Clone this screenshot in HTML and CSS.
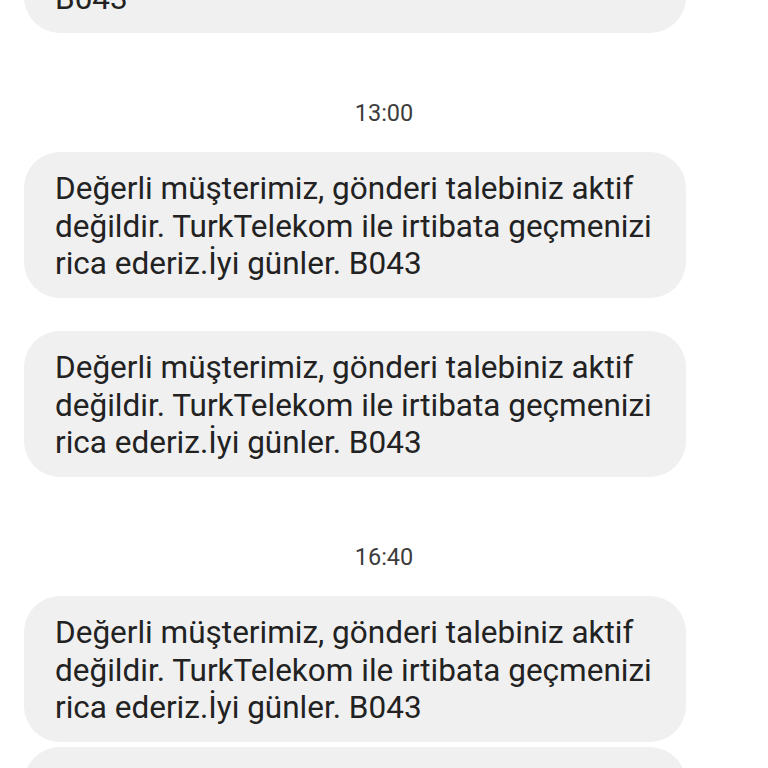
FILE: index.html
```html
<!DOCTYPE html>
<html lang="tr">
<head>
<meta charset="utf-8">
<link rel="stylesheet" href="styles.css">
</head>
<body>
<div class="chat">
  <div class="bubble first">Değerli müşterimiz, gönderi talebiniz aktif değildir. TurkTelekom ile irtibata geçmenizi rica ederiz.<br>İyi günler.<br>B043</div>
  <div class="time">13:00</div>
  <div class="bubble">Değerli müşterimiz, gönderi talebiniz aktif değildir. TurkTelekom ile irtibata geçmenizi rica ederiz.İyi günler. B043</div>
  <div class="bubble spaced">Değerli müşterimiz, gönderi talebiniz aktif değildir. TurkTelekom ile irtibata geçmenizi rica ederiz.İyi günler. B043</div>
  <div class="time">16:40</div>
  <div class="bubble">Değerli müşterimiz, gönderi talebiniz aktif değildir. TurkTelekom ile irtibata geçmenizi rica ederiz.İyi günler. B043</div>
  <div class="bubble tight">Değerli müşterimiz, gönderi talebiniz aktif değildir. TurkTelekom ile irtibata geçmenizi rica ederiz.İyi günler. B043</div>
</div>
</body>
</html>
```
FILE: styles.css
```css
html, body {
  margin: 0;
  padding: 0;
  background: #ffffff;
  overflow: hidden;
  height: 768px;
}
.chat {
  display: flex;
  flex-direction: column;
  font-family: Roboto, "Noto Sans", sans-serif;
}
.bubble {
  box-sizing: border-box;
  height: 146px;
  margin: 0 82px 0 24px;
  background: #f0f0f0;
  border-radius: 36px;
  padding: 18px 8px 0 31px;
  font-size: 31.5px;
  line-height: 37.5px;
  color: #222222;
}
.first {
  height: 221px;
  margin-top: -188px;
}
.spaced {
  margin-top: 33px;
}
.tight {
  margin-top: 5px;
}
.time {
  text-align: center;
  font-size: 23.5px;
  line-height: 24px;
  color: #3c3c3c;
  padding: 68px 0 27px;
}
```
